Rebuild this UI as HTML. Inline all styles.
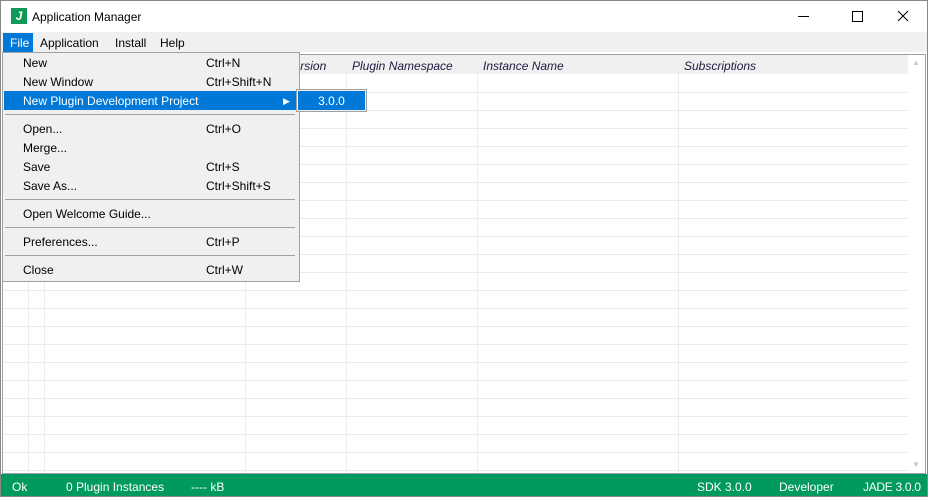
<!DOCTYPE html>
<html><head><style>
*{margin:0;padding:0;box-sizing:border-box}
body{width:928px;height:497px;position:relative;overflow:hidden;background:#fff;font-family:"Liberation Sans",sans-serif;font-size:12px;color:#000}
.a{position:absolute;white-space:nowrap}
.t{margin-top:1px}
</style></head><body>
<div class="a" style="left:0;top:0;width:928px;height:497px;border:1px solid #888"></div>
<div class="a" style="top:8px;left:11px;width:16px;height:16px;background:#0f9a58;color:#fff;font-weight:bold;font-style:italic;font-size:12px;text-align:center;line-height:16px">J</div>
<div class="a t" style="left:32px;top:9px;font-size:12px">Application Manager</div>
<svg class="a" style="left:790px;top:8px" width="130" height="16"><line x1="8" y1="8.5" x2="19" y2="8.5" stroke="#000"/><rect x="62.5" y="3.5" width="10" height="10" fill="none" stroke="#000"/><path d="M108 3L118 13M118 3L108 13" stroke="#000"/></svg>
<div class="a" style="left:1px;top:32px;width:926px;height:20px;background:#f0f0f0"></div>
<div class="a" style="left:3px;top:33px;width:30px;height:19px;background:#0078d7"></div>
<div class="a t" style="left:10px;top:35px;color:#fff">File</div>
<div class="a t" style="left:40px;top:35px">Application</div>
<div class="a t" style="left:115px;top:35px">Install</div>
<div class="a t" style="left:160px;top:35px">Help</div>
<div class="a" style="left:2px;top:54px;width:924px;height:420px;border:1px solid #a0a0a0;background:#fff"></div>
<div class="a" style="left:3px;top:55px;width:905px;height:19px;background:#f0f0f0"></div>
<svg class="a" style="left:3px;top:55px" width="905" height="418">
<g stroke="#ececec">
<line x1="25.5" y1="0" x2="25.5" y2="418"/><line x1="41.5" y1="0" x2="41.5" y2="418"/><line x1="242.5" y1="0" x2="242.5" y2="418"/><line x1="343.5" y1="0" x2="343.5" y2="418"/><line x1="474.5" y1="0" x2="474.5" y2="418"/><line x1="675.5" y1="0" x2="675.5" y2="418"/>
<line x1="0" y1="37.5" x2="905" y2="37.5"/><line x1="0" y1="55.5" x2="905" y2="55.5"/><line x1="0" y1="73.5" x2="905" y2="73.5"/><line x1="0" y1="91.5" x2="905" y2="91.5"/><line x1="0" y1="109.5" x2="905" y2="109.5"/><line x1="0" y1="127.5" x2="905" y2="127.5"/><line x1="0" y1="145.5" x2="905" y2="145.5"/><line x1="0" y1="163.5" x2="905" y2="163.5"/><line x1="0" y1="181.5" x2="905" y2="181.5"/><line x1="0" y1="199.5" x2="905" y2="199.5"/><line x1="0" y1="217.5" x2="905" y2="217.5"/><line x1="0" y1="235.5" x2="905" y2="235.5"/><line x1="0" y1="253.5" x2="905" y2="253.5"/><line x1="0" y1="271.5" x2="905" y2="271.5"/><line x1="0" y1="289.5" x2="905" y2="289.5"/><line x1="0" y1="307.5" x2="905" y2="307.5"/><line x1="0" y1="325.5" x2="905" y2="325.5"/><line x1="0" y1="343.5" x2="905" y2="343.5"/><line x1="0" y1="361.5" x2="905" y2="361.5"/><line x1="0" y1="379.5" x2="905" y2="379.5"/><line x1="0" y1="397.5" x2="905" y2="397.5"/><line x1="0" y1="415.5" x2="905" y2="415.5"/>
</g></svg>
<div class="a" style="left:908px;top:55px;width:17px;height:418px;background:#fff"></div>
<div class="a" style="left:912px;top:58px;font-size:8px;color:#c8c8c8">▲</div>
<div class="a" style="left:912px;top:460px;font-size:8px;color:#c8c8c8">▼</div>
<div class="a t" style="left:286px;top:58px;font-style:italic;color:#1a1a40">Version</div>
<div class="a t" style="left:352px;top:58px;font-style:italic;color:#1a1a40">Plugin Namespace</div>
<div class="a t" style="left:483px;top:58px;font-style:italic;color:#1a1a40">Instance Name</div>
<div class="a t" style="left:684px;top:58px;font-style:italic;color:#1a1a40">Subscriptions</div>
<div class="a" style="left:2px;top:52px;width:298px;height:230px;background:#f0f0f0;border:1px solid #a0a0a0"></div>
<div class="a" style="left:4px;top:91px;width:292px;height:19px;background:#0078d7"></div>
<div class="a" style="left:283px;top:96px;font-size:9px;color:#fff">▶</div>
<div class="a" style="left:5px;top:114px;width:290px;height:1px;background:#a0a0a0"></div>
<div class="a" style="left:5px;top:199px;width:290px;height:1px;background:#a0a0a0"></div>
<div class="a" style="left:5px;top:227px;width:290px;height:1px;background:#a0a0a0"></div>
<div class="a" style="left:5px;top:255px;width:290px;height:1px;background:#a0a0a0"></div>
<div class="a t" style="left:23px;top:55px">New</div><div class="a t" style="left:206px;top:55px">Ctrl+N</div>
<div class="a t" style="left:23px;top:74px">New Window</div><div class="a t" style="left:206px;top:74px">Ctrl+Shift+N</div>
<div class="a t" style="left:23px;top:93px;color:#fff">New Plugin Development Project</div>
<div class="a t" style="left:23px;top:121px">Open...</div><div class="a t" style="left:206px;top:121px">Ctrl+O</div>
<div class="a t" style="left:23px;top:140px">Merge...</div>
<div class="a t" style="left:23px;top:159px">Save</div><div class="a t" style="left:206px;top:159px">Ctrl+S</div>
<div class="a t" style="left:23px;top:178px">Save As...</div><div class="a t" style="left:206px;top:178px">Ctrl+Shift+S</div>
<div class="a t" style="left:23px;top:206px">Open Welcome Guide...</div>
<div class="a t" style="left:23px;top:234px">Preferences...</div><div class="a t" style="left:206px;top:234px">Ctrl+P</div>
<div class="a t" style="left:23px;top:262px">Close</div><div class="a t" style="left:206px;top:262px">Ctrl+W</div>
<div class="a" style="left:296px;top:89px;width:71px;height:23px;background:#f0f0f0;border:1px solid #a0a0a0"></div>
<div class="a" style="left:298px;top:91px;width:67px;height:19px;background:#0078d7;color:#fff;text-align:center;line-height:21px">3.0.0</div>
<div class="a" style="left:1px;top:474px;width:926px;height:22px;background:#009a5e;color:#fff">
<span class="a t" style="left:11px;top:5px">Ok</span>
<span class="a t" style="left:65px;top:5px">0 Plugin Instances</span>
<span class="a t" style="left:190px;top:5px">---- kB</span>
<span class="a t" style="left:696px;top:5px">SDK 3.0.0</span>
<span class="a t" style="left:778px;top:5px">Developer</span>
<span class="a t" style="left:862px;top:5px;letter-spacing:-0.3px">JADE 3.0.0</span>
</div>
</body></html>
